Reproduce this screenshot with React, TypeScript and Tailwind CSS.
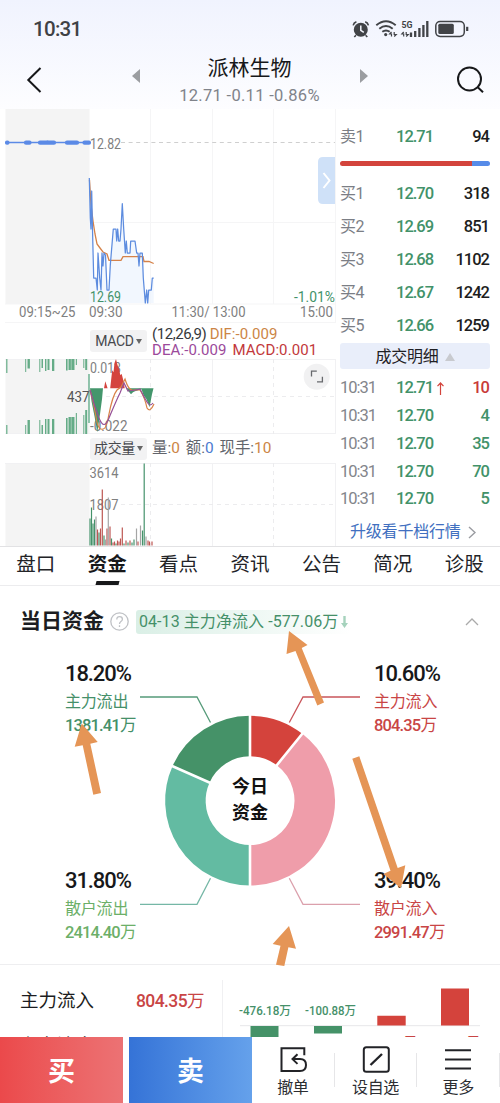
import React from "react";

type LabelProps = { x: number; y: number; w: number; size?: number; fill?: string; children: string };

function Label({ x, y, w, size = 14.5, fill = "#808080", children }: LabelProps) {
  return (
    <text x={x} y={y} fontSize={size} fill={fill} textLength={w} lengthAdjust="spacingAndGlyphs">
      {children}
    </text>
  );
}

function StatusBar() {
  return (
    <div className="flex h-[58px] items-center justify-between pl-[33px] pr-[30px]">
      <span className="text-[20.5px] font-medium tracking-[-0.7px] text-[#3f4145]">10:31</span>
      <svg width="120" height="24" viewBox="350 17 120 24" fill="none" stroke="#414347">
        <circle cx="360.8" cy="29.8" r="7" fill="#414347" stroke="none" />
        <path d="M360.8 25.5v4.8l3 2" stroke="#f5f7fe" strokeWidth="1.5" />
        <path d="M353.2 25.3q.5-2.5 3.2-3.5M365.2 21.8q2.7 1 3.2 3.5M356 35.2l-1.7 1.8M365.6 35.2l1.7 1.8" strokeWidth="1.6" />
        <path d="M376.3 25.3q9.7-8 19.4 0M379.3 28.7q6.7-5.3 13.4 0M382.3 31.8q3.7-2.7 7.4 0" strokeWidth="2" />
        <circle cx="385.7" cy="34.6" r="1.6" fill="#414347" stroke="none" />
        <path d="M391.5 32l-1.8 2h1.8v2.5M394.2 36.5l2-2h-2V32" strokeWidth="1.2" />
        <text x="401.5" y="28" fontSize="9.5" fontWeight="700" fill="#414347" stroke="none" textLength="11" lengthAdjust="spacingAndGlyphs">5G</text>
        <path d="M403.7 32l-1.8 2h1.8v2.5M406.2 36.5l2-2h-2V32" strokeWidth="1.2" />
        <path d="M411 37v-4.5M415.2 37v-6M419.4 37v-9M423.4 37v-12M427.3 37V21" strokeWidth="2.3" />
        <rect x="435.8" y="21.4" width="28.5" height="15" rx="4.3" strokeWidth="1.5" />
        <rect x="438.3" y="23.8" width="15.5" height="10.2" rx="1.5" fill="#414347" stroke="none" />
        <path d="M467.2 26.8v4.2" strokeWidth="2.2" />
      </svg>
    </div>
  );
}

function TitleBar() {
  return (
    <div className="flex h-[51px] items-start justify-between pl-[26px] pr-[15px]">
      <svg className="mt-[8px]" width="18" height="28" viewBox="0 0 18 28" fill="none" stroke="#17181a" strokeWidth="2">
        <path d="M14.5 2L2.3 14l12.2 12" />
      </svg>
      <div className="flex items-start gap-[38px] pl-[86px] pr-[87px]">
        <svg className="mt-[11px]" width="10" height="14"><path d="M9 0v14L1 7z" fill="#9b9da1" /></svg>
        <div className="flex w-[142px] flex-col items-center">
          <h1 className="mt-[-4px] text-[21px] leading-[28px] text-[#17181a]">派林生物</h1>
          <p className="mt-[4px] whitespace-nowrap text-[16.5px] leading-[20px] tracking-[0.3px] text-[#80838a]">12.71 -0.11 -0.86%</p>
        </div>
        <svg className="mt-[11px]" width="10" height="14"><path d="M1 0v14l8-7z" fill="#9b9da1" /></svg>
      </div>
      <svg className="mt-[7px]" width="29" height="28" viewBox="0 0 29 28" fill="none" stroke="#17181a" strokeWidth="2">
        <circle cx="13.5" cy="14" r="11.5" />
        <path d="M21.5 22l5.5 5.2" />
      </svg>
    </div>
  );
}

const PRICE =
  "89.3,178 90.3,218 91,229 91.7,191 92.7,238 93.7,278 96,278 97.3,290 98,253 99.7,278 101,290 102,253 103,266 104,253 105.5,255 107,290 109,290 110.3,265 113.3,229 116,229 116.7,241 117.7,229 118.7,241 120,241 121,229 122.3,203.7 123.7,229 125.3,253 126.3,241 127.3,253 130,253 130.7,241 135,241 136.7,253 138,253 139,266 140,253 142.3,253 143.3,278 145.3,303 146.7,290 147.7,303 148.7,290 151.3,290 152.3,278 153.7,278";

function PriceChart() {
  return (
    <svg className="block" width="336" height="214" viewBox="0 109 336 214" fill="none">
      <rect x="5.5" y="109" width="84" height="195" fill="#f4f4f4" />
      <path d="M150.5 109v195M212.5 109v195M273.5 109v195M89 222.5h246M5 304h330M5 322.5h330M335.5 109v214" stroke="#f5f5f6" />
      <path d="M121 142.5h214" stroke="#cfcfcf" strokeDasharray="4 3.6" />
      <polygon points={`89.3,303 ${PRICE} 153.7,303`} fill="#eff5fe" opacity=".8" />
      <path d="M6 142.5h84" stroke="#5b8ae6" strokeWidth="1.3" />
      <path d="M7 142.7h.5M26 142.7h3.5M40 142.7h7M48 142.7h6M67 142.7h10M84.5 142.7h4.5" stroke="#5b8ae6" strokeWidth="4.2" strokeLinecap="round" />
      <Label x={90} y={148.7} w={31}>12.82</Label>
      <Label x={90} y={301.6} w={31} fill="#429269">12.69</Label>
      <Label x={294} y={301.6} w={41} fill="#429269">-1.01%</Label>
      <polyline points="89.5,180 91,205 93,221 95,234 97,244 100,248 103,252 107,254 109,260.3 121,260.3 123,256.7 143,256.7 144,261.5 149,261.5 153.7,263.5" stroke="#d58249" strokeWidth="1.3" />
      <polyline points={PRICE} stroke="#5d8cdf" strokeWidth="1.25" strokeLinejoin="round" />
      <path d="M335 157h-12q-5 0-5 5v37q0 5 5 5h12z" fill="#cfe1f8" />
      <path d="M323.5 173l6 7.5-6 7.5" stroke="#fff" strokeWidth="2" />
      <Label x={19} y={317} w={56.5}>09:15~25</Label>
      <Label x={89} y={317} w={33.5}>09:30</Label>
      <Label x={171.5} y={317} w={74}>11:30/ 13:00</Label>
      <Label x={300} y={317} w={33}>15:00</Label>
    </svg>
  );
}

const TICKS: [number, number, number, number][] = [
  [6.2, 1.2, 14, 9], [25.2, 1, 13, 9], [27.5, 2.4, 9.5, 14], [39.3, 1, 13, 14], [41.5, 1.5, 9, 9], [45, 1.4, 12, 15], [47.5, 2, 11, 15],
  [52, 2.3, 12, 15], [66, 1.6, 11.5, 16], [68.5, 2.4, 11, 17], [71.3, 3.2, 11, 17], [75.8, 1.1, 6, 21], [83.3, 1, 9, 19], [85.2, 2, 11, 24],
];

function MacdChart() {
  return (
    <svg className="block" width="336" height="75" viewBox="0 359 336 75" fill="none">
      <rect x="5.5" y="359" width="84" height="75" fill="#f4f4f4" />
      <path d="M5 359.5h330M5 433.5h330M212.5 359v75M335.5 359v75" stroke="#f1f1f3" />
      <path d="M150.5 359v75M273.5 359v75M90 396.5h245" stroke="#ececee" strokeDasharray="4 4" />
      {TICKS.map(([x, w, top, bottom]) => (
        <g key={x} fill="#65ac87">
          <rect x={x} y={359} width={w} height={top} />
          <rect x={x} y={434 - bottom} width={w} height={bottom} />
        </g>
      ))}
      <path d="M89 374v49" stroke="#4ba079" strokeWidth="1.2" />
      <Label x={67} y={401.5} w={22.5} fill="#555">437</Label>
      <Label x={90} y={373} w={31}>0.013</Label>
      <Label x={90} y={431} w={37.5} size={14}>-0.022</Label>
      <path d="M104 388.3l1.3-7 1 3 1.3 4h2.6l2-18 1.3 2 1-9.3 1.5-4 1.2 5 1 3 1 2 1 6 1.5-1 1.8 7 1.2 7.3z" fill="#d4443e" />
      <path d="M90 388.3h13l-1 11-2 15-2.7 18-2.8-16-3-15-1.5-13zM126 388.3h27.5l-1.5 6-2.5 13-3-8-3-4-2-6-3.5 1-3 1-2 1-2 2z" fill="#44966c" />
      <path d="M90 390q4 13 6 27t7 12q3 0 5-10c2-10 4-23 9-29l4-3 4-8q4 13 9 11h6q5 8 7 18 3 5 7-4" stroke="#d98247" strokeWidth="1.2" />
      <path d="M90 390q4 15 9 28t10 0c3-7 7-17 11-25l4-10 4 8q9-1 12-2 4 8 7 13 3 5 6 1" stroke="#965096" strokeWidth="1.2" />
      <circle cx="316.7" cy="376.7" r="13" fill="#f1f1f2" />
      <path d="M311.5 376.5v-5.3h5.3M317 381.8h5.4v-5" stroke="#67696d" strokeWidth="1.3" />
    </svg>
  );
}

const VOLUME: [number, number, string][] = [
  [90, 27, "g"], [91.5, 38, "g"], [93, 22, "g"], [94.5, 26, "g"], [96, 29, "s"], [97.5, 16, "r"], [99, 13, "g"], [100.5, 17, "r"],
  [102.3, 56, "r"], [104, 10, "g"], [105.5, 6, "s"], [107, 17, "r"], [108.3, 48, "s"], [110, 19, "r"], [111.5, 7, "g"], [113, 3, "r"],
  [114.5, 4, "r"], [116, 2, "g"], [117.5, 5, "r"], [119, 4, "r"], [120.5, 7, "r"], [122.3, 18, "r"], [124, 2, "g"], [126, 5, "r"],
  [128, 3, "g"], [130, 5, "r"], [132, 3, "g"], [134, 6, "g"], [136.5, 17, "s"], [138, 4, "r"], [140.5, 20, "s"], [142.5, 15, "g"],
  [144.2, 82, "g"], [146, 9, "s"], [148, 5, "r"], [149.5, 4, "r"], [152, 4, "r"],
];
const VOLUME_COLORS: Record<string, string> = { g: "#45926b", r: "#bd5652", s: "#a5a5a5" };

function VolumeChart() {
  return (
    <svg className="block" width="336" height="83" viewBox="0 463 336 83" fill="none">
      <rect x="5.5" y="464" width="84" height="82" fill="#f4f4f4" />
      <path d="M5 463.5h330M212.5 463v83M335.5 463v83" stroke="#f1f1f3" />
      <path d="M150.5 463v83M273.5 463v83M121 504.5h214" stroke="#ececee" strokeDasharray="4 4" />
      <Label x={89.5} y={477.5} w={29}>3614</Label>
      <Label x={89.5} y={509.5} w={29}>1807</Label>
      {VOLUME.map(([x, h, c]) => (
        <path key={x} d={`M${x} 545.5v-${h}`} stroke={VOLUME_COLORS[c]} strokeWidth="1.2" />
      ))}
    </svg>
  );
}

function Chip({ children }: { children: string }) {
  return (
    <div className="flex h-[22px] w-[57px] shrink-0 items-center justify-center gap-[2px] rounded-[3px] bg-[#f2f2f3] text-[#47494d]">
      <span className="whitespace-nowrap text-[14px] tracking-[-0.3px]">{children}</span>
      <svg width="6" height="5"><path d="M0 0h6L3 5z" fill="#666" /></svg>
    </div>
  );
}

const BIDS = [["买1", "12.70", "318"], ["买2", "12.69", "851"], ["买3", "12.68", "1102"], ["买4", "12.67", "1242"], ["买5", "12.66", "1259"]];
const TRADES = [["12.71", "10"], ["12.70", "4"], ["12.70", "35"], ["12.70", "70"], ["12.70", "5"]];

function QuoteRow({ name, price, count }: { name: string; price: string; count: string }) {
  return (
    <div className="grid h-[33px] grid-cols-[56px_1fr_auto] items-center pr-[1px] pt-[3px] text-[16.5px] tracking-[-1px]">
      <span className="text-[16px] tracking-[-0.5px] text-[#7b7e85]">{name}</span>
      <span className="font-medium text-[#429269]">{price}</span>
      <span className="font-medium text-[#1c1d20]">{count}</span>
    </div>
  );
}

function OrderBook() {
  return (
    <aside className="flex h-[437px] w-[164px] flex-col pl-[4px] pr-[10px]">
      <div className="pt-[10px]"><QuoteRow name="卖1" price="12.71" count="94" /></div>
      <div className="mb-[10px] mt-[9px] flex h-[5px] shrink-0 overflow-hidden rounded-full">
        <div className="w-[132px] bg-[#d3443c]" />
        <div className="flex-1 bg-[#568be8]" />
      </div>
      {BIDS.map(([n, p, c]) => <QuoteRow key={n} name={n} price={p} count={c} />)}
      <div className="mt-[2px] flex h-[26px] shrink-0 items-center justify-center gap-[6px] rounded-[3px] bg-[#e9eefa] pt-[2px] text-[16px] tracking-[-0.2px] text-[#1f2024]">
        成交明细
        <svg width="10" height="8"><path d="M5 0l5 8H0z" fill="#c8cacf" /></svg>
      </div>
      <div className="pt-[6px]">
        {TRADES.map(([p, c], i) => (
          <div key={i} className="grid h-[27.7px] grid-cols-[56px_1fr_auto] items-center pr-[1px] text-[16.5px] tracking-[-1px]">
            <span className="text-[#83858b]">10:31</span>
            <span className="flex items-center font-medium text-[#429269]">
              {p}
              {i === 0 && <svg className="ml-[4px]" width="7" height="13" fill="none" stroke="#d3443c" strokeWidth="1.2"><path d="M3.5 13V1M.5 4.2L3.5 1l3 3.2" /></svg>}
            </span>
            <span className={i === 0 ? "font-medium text-[#c93b38]" : "font-medium text-[#429269]"}>{c}</span>
          </div>
        ))}
      </div>
      <div className="mt-[7px] flex items-center gap-[7px] pl-[10px] text-[16px] leading-[24px] tracking-[-0.2px] text-[#416fc0]">
        <span className="whitespace-nowrap">升级看千档行情</span>
        <svg width="8" height="13" fill="none" stroke="#999ba0" strokeWidth="1.4"><path d="M1 1l6 5.5L1 12" /></svg>
      </div>
    </aside>
  );
}

function Tabs() {
  return (
    <nav className="grid h-[40px] shrink-0 grid-cols-7 border-b border-t border-b-[#ececee] border-t-[#e2e2e4]">
      {["盘口", "资金", "看点", "资讯", "公告", "简况", "诊股"].map((t) => (
        <div key={t} className="flex flex-col items-center">
          <span className={t === "资金" ? "text-[19.5px] font-bold leading-[36px] text-[#17181a]" : "text-[19.5px] leading-[36px] text-[#222327]"}>{t}</span>
          {t === "资金" && <div className="mt-[-2px] h-[4px] w-[23px] shrink-0 skew-x-[-15deg] bg-[#17181a]" />}
        </div>
      ))}
    </nav>
  );
}

function Stat({ pct, name, value, tone }: { pct: string; name: string; value: string; tone: string }) {
  return (
    <div className={tone}>
      <div className="text-[22px] font-medium leading-[27px] tracking-[-1.1px] text-[#17181a]">{pct}</div>
      <div className="mt-[2px] text-[16px] leading-[26px] tracking-[-0.2px]">{name}</div>
      <div className="whitespace-nowrap text-[16.5px] leading-[22px] tracking-[-0.85px]">
        <span className="font-medium">{value}</span>万
      </div>
    </div>
  );
}

function Donut() {
  return (
    <svg width="230" height="230" viewBox="135 685 230 230" fill="none">
      <g strokeWidth="40.5">
        <path d="M250 736.1A64.6 64.6 0 0 1 289.9 749.8" stroke="#d4433c" />
        <path d="M289.9 749.8A64.6 64.6 0 0 1 250 865.3" stroke="#ef9daa" />
        <path d="M250 865.3A64.6 64.6 0 0 1 191 774.4" stroke="#63bba2" />
        <path d="M191 774.4A64.6 64.6 0 0 1 250 736.1" stroke="#459268" />
      </g>
      <path d="M250 714v44M250 844v43M303.3 732.5l-29.2 36M171.5 765.8l39 17.2" stroke="#fff" strokeWidth="2.6" />
      <path d="M140 697h57l13.5 25.5" stroke="#569b7a" strokeWidth="1.3" />
      <path d="M360 697h-57l-13.7 25.5" stroke="#c9565b" strokeWidth="1.3" />
      <path d="M140 904.3h57l13.5-26" stroke="#75b7a6" strokeWidth="1.3" />
      <path d="M360 904.3h-57l-13.7-26" stroke="#dba0ac" strokeWidth="1.3" />
      <g fontSize="18" fontWeight="700" fill="#111" textAnchor="middle">
        <text x="250" y="793">今日</text>
        <text x="250" y="819">资金</text>
      </g>
    </svg>
  );
}

function FundSection() {
  return (
    <section className="relative h-[379px] shrink-0 border-b border-[#eeeef0]">
      <header className="flex h-[71px] items-center pl-[20px] pr-[21px]">
        <h2 className="text-[21px] font-bold text-[#1c1d21]">当日资金</h2>
        <svg className="ml-[6px]" width="19" height="19" viewBox="0 0 19 19" fill="none" stroke="#bfc1c5" strokeWidth="1.3">
          <circle cx="9.5" cy="9.5" r="8.7" />
          <path d="M6.8 7.5q0-2.8 2.8-2.8t2.8 2.5q0 1.3-1.5 2.3T9.5 12M9.5 13.3v1.6" />
        </svg>
        <div className="ml-[7px] flex h-[24px] w-[215px] items-center rounded-[3px] bg-linear-to-r from-[#daefe6] to-white pl-[3px] text-[#459069]">
          <span className="whitespace-nowrap text-[16px] tracking-[0.07px]">04-13 主力净流入 -577.06万</span>
          <svg className="ml-[3px]" width="7" height="12"><path d="M2.3 0h2.4v7H7l-3.5 5L0 7h2.3z" fill="#a5d2bc" /></svg>
        </div>
        <svg className="ml-auto" width="14" height="8" fill="none" stroke="#aaa" strokeWidth="1.3"><path d="M1 7l6-6 6 6" /></svg>
      </header>
      <div className="flex h-[300px] pl-[65px]">
        <div className="flex w-[70px] flex-col gap-[130px] pt-[3px]">
          <Stat pct="18.20%" name="主力流出" value="1381.41" tone="text-[#459069]" />
          <Stat pct="31.80%" name="散户流出" value="2414.40" tone="text-[#6caf68]" />
        </div>
        <div className="w-[239px] shrink-0 pt-[28px]"><Donut /></div>
        <div className="flex flex-col gap-[130px] pt-[3px]">
          <Stat pct="10.60%" name="主力流入" value="804.35" tone="text-[#c94545]" />
          <Stat pct="39.40%" name="散户流入" value="2991.47" tone="text-[#c94545]" />
        </div>
      </div>
      <svg className="pointer-events-none absolute left-0 top-0 overflow-visible" width="500" height="379" viewBox="0 586 500 379" fill="#e59556">
        <path d="M289 631l18.5 14-5.8 3 22.3 54.6-6.7 3L295.5 651l-9 3z" />
        <path d="M81.7 723.5l16 18.5-7.4 1.7L101 793l-7.7 1.7-10.6-49.4-8 1.4z" />
        <path d="M352.3 758.7l7-2.4L397.7 868l7.6-2.7-4.3 23-17.7-14.3 7.2-3.3z" />
        <path d="M289 926l7 22.7-7.6-1.5-4.1 18.8-8.3-1.3 4.5-19-7.8-1.7z" />
      </svg>
    </section>
  );
}

function NetFlow() {
  return (
    <section className="flex h-[72px] shrink-0 overflow-hidden">
      <div className="grid w-[222px] shrink-0 auto-rows-[45px] grid-cols-[115px_1fr] items-center pl-[20px] pt-[14px]">
        <span className="text-[18.5px] text-[#1c1d21]">主力流入</span>
        <span className="whitespace-nowrap pl-px text-[17.5px] tracking-[-0.6px] text-[#c94545]"><span className="font-medium">804.35</span>万</span>
        <span className="text-[18.5px] text-[#1c1d21]">主力流出</span>
      </div>
      <svg width="278" height="72" viewBox="222 965 278 72">
        <path d="M222.5 980v57" stroke="#f0f0f2" />
        <path d="M240 1025.7h240" stroke="#e7e7e9" />
        <path d="M250.5 1026h28v11.5h-28zM314 1026h28v7.5h-28z" fill="#459268" />
        <path d="M377.3 1015.8h28.4v9.7h-28.4zM441 988.5h28v37h-28z" fill="#d4433c" />
        <g fontWeight="500">
          <Label x={239} y={1015} w={52} size={12} fill="#459069">-476.18万</Label>
          <Label x={305} y={1015} w={51} size={12} fill="#459069">-100.88万</Label>
          <Label x={370} y={1045.5} w={46} size={12} fill="#c94545">118.58万</Label>
          <Label x={433} y={1045.5} w={46} size={12} fill="#c94545">458.48万</Label>
        </g>
      </svg>
    </section>
  );
}

function BottomBar() {
  const item = "flex flex-1 flex-col items-center pt-[7px] text-[16px] text-[#2c2d31]";
  const divider = "mt-[16px] h-[34px] w-px bg-[#e6e6e8]";
  return (
    <footer className="flex h-[66px] shrink-0 bg-white">
      <div className="flex w-[123px] items-center justify-center bg-linear-to-r from-[#eb494b] to-[#ec7274] pt-[4px] text-[27px] font-bold text-white">买</div>
      <div className="ml-[6px] flex w-[123px] items-center justify-center bg-linear-to-r from-[#3573d7] to-[#65a1eb] pt-[4px] text-[27px] font-bold text-white">卖</div>
      <div className={item}>
        <svg width="30" height="30" viewBox="279 1044 30 30" fill="none" stroke="#222327" strokeWidth="2">
          <path d="M305.3 1055.3v-7h-22.8v22.8h18.5q6 0 6-6t-6-6h-7M298.5 1054.3l-5 4.8 5 4.8" />
        </svg>
        <span className="leading-[28px] tracking-[-0.3px]">撤单</span>
      </div>
      <div className={divider} />
      <div className={item}>
        <svg width="30" height="30" viewBox="361 1044 30 30" fill="none" stroke="#222327" strokeWidth="2">
          <rect x="363.8" y="1047.2" width="25" height="24.5" rx="2.5" />
          <path d="M370.5 1065l11.5-11" strokeWidth="2.4" />
        </svg>
        <span className="leading-[28px] tracking-[-0.3px]">设自选</span>
      </div>
      <div className={divider} />
      <div className={item}>
        <svg width="30" height="30" viewBox="443 1044 30 30" fill="none" stroke="#222327" strokeWidth="2">
          <path d="M445 1050.3h26M445 1059.4h26M445 1068.4h26" />
        </svg>
        <span className="leading-[28px] tracking-[-0.3px]">更多</span>
      </div>
      <div className={divider} />
    </footer>
  );
}

export default function App() {
  return (
    <div className="flex h-[1103px] w-[500px] flex-col overflow-hidden bg-white font-['Roboto','Noto_Sans_CJK_SC',sans-serif]">
      <header className="h-[109px] shrink-0 bg-linear-to-b from-[#f0f3fe] to-[#fdfdff]">
        <StatusBar />
        <TitleBar />
      </header>
      <main className="flex h-[437px] shrink-0">
        <div className="w-[336px] shrink-0">
          <PriceChart />
          <div className="flex h-[36px] items-center gap-[5px] pl-[90px]">
            <Chip>MACD</Chip>
            <div className="whitespace-nowrap pt-px text-[15px] leading-[16px] text-[#36383c]">
              <div className="tracking-[-0.45px]">(12,26,9) <span className="tracking-[0px] text-[#cc8546]">DIF:-0.009</span></div>
              <div className="tracking-[0.1px] text-[#9b4a9b]">DEA:-0.009 <span className="ml-[2px] text-[#c2383b]">MACD:0.001</span></div>
            </div>
          </div>
          <MacdChart />
          <div className="flex h-[29px] items-center gap-[5px] pl-[90px]">
            <Chip>成交量</Chip>
            <div className="flex gap-[6px] whitespace-nowrap text-[15.4px] text-[#62656c]">
              <span>量:<span className="text-[#cc8546]">0</span></span>
              <span>额:<span className="text-[#4b7bd0]">0</span></span>
              <span>现手:<span className="text-[#cc8546]">10</span></span>
            </div>
          </div>
          <VolumeChart />
        </div>
        <OrderBook />
      </main>
      <Tabs />
      <FundSection />
      <NetFlow />
      <BottomBar />
    </div>
  );
}
